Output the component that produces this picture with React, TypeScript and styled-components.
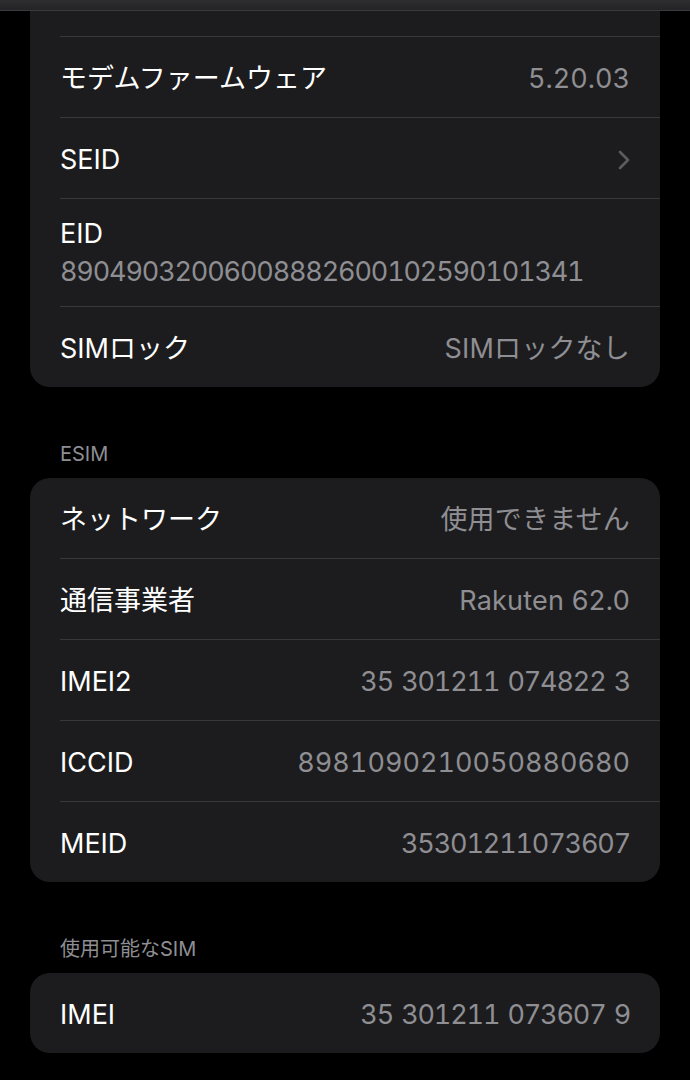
import React from "react";
import styled, { createGlobalStyle } from "styled-components";

const GlobalStyle = createGlobalStyle`
  html, body {
    margin: 0;
    padding: 0;
    background: #000;
  }
  body {
    font-family: "Inter", "Noto Sans CJK JP", sans-serif;
    -webkit-font-smoothing: antialiased;
  }
`;

type Digits = "tight" | "mono";

type Row = {
  label: string;
  value?: string;
  digits?: Digits;
  stacked?: boolean;
  chevron?: boolean;
};

const firstGroup: Row[] = [
  { label: "モデムファームウェア", value: "5.20.03", digits: "mono" },
  { label: "SEID", chevron: true },
  {
    label: "EID",
    value: "89049032006008882600102590101341",
    digits: "tight",
    stacked: true,
  },
  { label: "SIMロック", value: "SIMロックなし" },
];

const esimGroup: Row[] = [
  { label: "ネットワーク", value: "使用できません" },
  { label: "通信事業者", value: "Rakuten 62.0" },
  { label: "IMEI2", value: "35 301211 074822 3", digits: "tight" },
  { label: "ICCID", value: "8981090210050880680", digits: "mono" },
  { label: "MEID", value: "35301211073607", digits: "tight" },
];

const availableGroup: Row[] = [
  { label: "IMEI", value: "35 301211 073607 9", digits: "tight" },
];

const Chevron = () => (
  <svg width="12" height="20" viewBox="0 0 12 20" fill="none">
    <path
      d="M2 2l8 8-8 8"
      stroke="#5b5b60"
      strokeWidth="2.6"
      strokeLinecap="round"
      strokeLinejoin="round"
    />
  </svg>
);

const Group = ({ rows, cutTop }: { rows: Row[]; cutTop?: boolean }) => (
  <Card $cutTop={cutTop}>
    {cutTop && <TopStub />}
    {rows.map((row, i) => {
      const divided = cutTop || i > 0;
      return row.stacked ? (
        <StackedItem key={row.label} $divided={divided}>
          <Label>{row.label}</Label>
          <Value $digits={row.digits}>{row.value}</Value>
        </StackedItem>
      ) : (
        <Item key={row.label} $divided={divided}>
          <Label>{row.label}</Label>
          {row.value && <Value $digits={row.digits}>{row.value}</Value>}
          {row.chevron && <Chevron />}
        </Item>
      );
    })}
  </Card>
);

export default function App() {
  return (
    <Screen>
      <GlobalStyle />
      <NavStrip />
      <Content>
        <Group rows={firstGroup} cutTop />
        <SectionHeader>ESIM</SectionHeader>
        <Group rows={esimGroup} />
        <SectionHeader>使用可能なSIM</SectionHeader>
        <Group rows={availableGroup} />
      </Content>
    </Screen>
  );
}

const Screen = styled.div`
  width: 690px;
  height: 1080px;
  background: #000;
  overflow: hidden;
  display: flex;
  flex-direction: column;
`;

const NavStrip = styled.div`
  height: 10px;
  flex-shrink: 0;
  background: linear-gradient(#2e2e31, #242426);
  border-bottom: 1px solid #3a3a3d;
`;

const Content = styled.div`
  display: flex;
  flex-direction: column;
  padding: 0 30px;
`;

const Card = styled.div<{ $cutTop?: boolean }>`
  background: #1c1c1e;
  border-radius: ${(p) => (p.$cutTop ? "0 0 20px 20px" : "20px")};
  overflow: hidden;
  display: flex;
  flex-direction: column;
`;

const TopStub = styled.div`
  height: 25px;
`;

const Item = styled.div<{ $divided?: boolean }>`
  height: 76px;
  padding: 4px 30px 0 0;
  margin-left: 30px;
  display: flex;
  align-items: center;
  justify-content: space-between;
  border-top: ${(p) => (p.$divided ? "1px solid #38383a" : "none")};
`;

const StackedItem = styled.div<{ $divided?: boolean }>`
  height: 107px;
  margin-left: 30px;
  padding-right: 30px;
  display: flex;
  flex-direction: column;
  justify-content: center;
  gap: 4px;
  border-top: ${(p) => (p.$divided ? "1px solid #38383a" : "none")};
`;

const Label = styled.span`
  color: #fff;
  font-size: 27px;
  line-height: 34px;
  white-space: nowrap;
`;

const Value = styled.span<{ $digits?: Digits }>`
  color: #8e8e93;
  font-size: 27px;
  line-height: 34px;
  white-space: nowrap;
  font-variant-numeric: ${(p) => (p.$digits ? "tabular-nums" : "normal")};
  letter-spacing: ${(p) =>
    p.$digits === "tight" ? "-1.15px" : p.$digits === "mono" ? "0" : "0.2px"};
  word-spacing: ${(p) => (p.$digits === "tight" ? "2px" : "0")};
`;

const SectionHeader = styled.div`
  color: #8e8e93;
  font-size: 20px;
  line-height: 24px;
  padding: 55px 30px 12px;
`;
